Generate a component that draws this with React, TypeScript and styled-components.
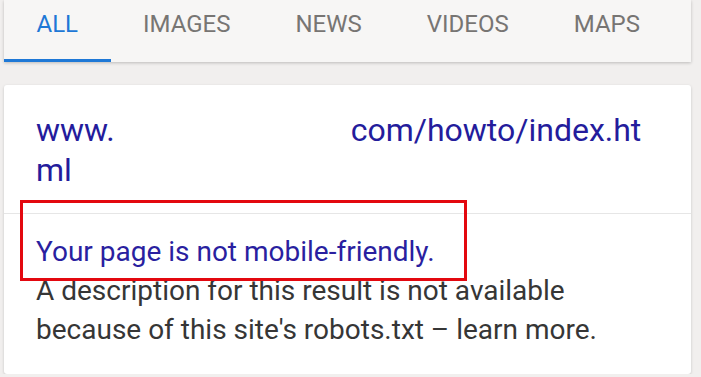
import React from "react";
import styled, { createGlobalStyle } from "styled-components";

const Global = createGlobalStyle`
  html, body { margin: 0; padding: 0; }
  body {
    background: #f1efee;
    font-family: Roboto, "Noto Sans", "Liberation Sans", sans-serif;
    -webkit-font-smoothing: antialiased;
    overflow: hidden;
  }
`;

const Page = styled.div`
  width: 687px;
  margin-left: 4px;
  display: flex;
  flex-direction: column;
  gap: 23px;
`;

const TabBar = styled.nav`
  height: 62px;
  background: #f7f6f5;
  box-shadow: 0 1px 3px rgba(0, 0, 0, 0.22);
  display: flex;
  align-items: stretch;
`;

const Tab = styled.div<{ $active?: boolean }>`
  padding: 10px 32.5px 0 32.5px;
  box-sizing: border-box;
  font-size: 24px;
  line-height: 28px;
  color: ${(p) => (p.$active ? "#1e78d6" : "#777573")};
  border-bottom: 3px solid ${(p) => (p.$active ? "#1e78d6" : "transparent")};
`;

const Card = styled.section`
  position: relative;
  background: #fff;
  border-radius: 3px;
  box-shadow: 0 1px 3px rgba(0, 0, 0, 0.18);
  display: flex;
  flex-direction: column;
`;

const UrlBlock = styled.div`
  padding: 25px 32px 23px 32px;
  font-size: 32px;
  line-height: 40px;
  color: #241c9c;
`;

const UrlLine = styled.div`
  display: flex;
  align-items: baseline;
  white-space: nowrap;
`;

const Redacted = styled.span`
  display: inline-block;
  width: 236px;
  height: 1px;
`;

const Divider = styled.hr`
  margin: 0;
  border: 0;
  border-top: 1px solid #e6e6e6;
`;

const Snippet = styled.div`
  padding: 18px 32px 25px 32px;
  font-size: 28px;
  line-height: 39px;
  color: #363636;
`;

const Warning = styled.div`
  color: #2a1fa0;
`;

const Highlight = styled.div`
  position: absolute;
  left: 16px;
  top: 115px;
  width: 447px;
  height: 81px;
  box-sizing: border-box;
  border: 3px solid #e3080f;
  pointer-events: none;
`;

export default function App() {
  return (
    <>
      <Global />
      <Page>
        <TabBar>
          <Tab $active>ALL</Tab>
          <Tab>IMAGES</Tab>
          <Tab>NEWS</Tab>
          <Tab>VIDEOS</Tab>
          <Tab>MAPS</Tab>
        </TabBar>
        <Card>
          <UrlBlock>
            <UrlLine>
              <span>www.</span>
              <Redacted />
              <span>com/howto/index.ht</span>
            </UrlLine>
            <UrlLine>
              <span>ml</span>
            </UrlLine>
          </UrlBlock>
          <Divider />
          <Snippet>
            <Warning>Your page is not mobile-friendly.</Warning>
            A description for this result is not available because of this
            site's robots.txt – learn more.
          </Snippet>
          <Highlight />
        </Card>
      </Page>
    </>
  );
}
